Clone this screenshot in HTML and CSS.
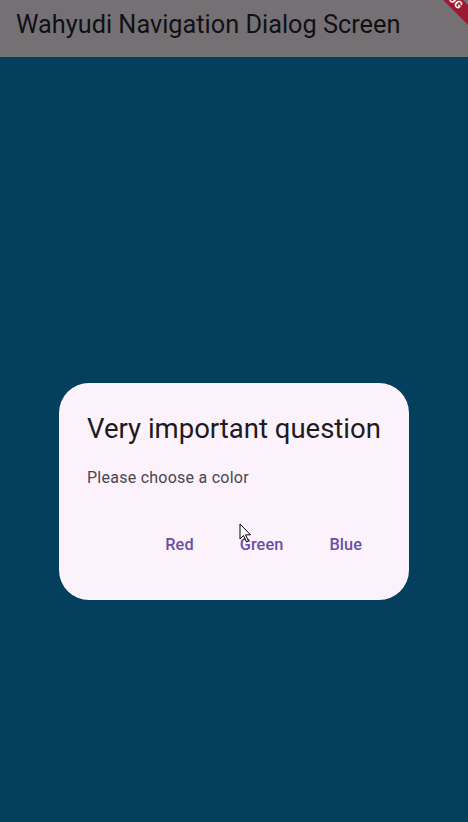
FILE: index.html
```html
<!DOCTYPE html>
<html>
<head>
<meta charset="utf-8">
<link rel="stylesheet" href="styles.css">
</head>
<body>
<div class="screen">
  <header class="appbar"><h1 class="appbar-title">Wahyudi Navigation Dialog Screen</h1></header>
  <main class="content">
    <div class="dialog">
      <h2 class="dialog-title">Very important question</h2>
      <p class="dialog-text">Please choose a color</p>
      <div class="actions">
        <button class="btn">Red</button>
        <button class="btn">Green</button>
        <button class="btn">Blue</button>
      </div>
    </div>
  </main>
  <div class="banner"><span>DEBUG</span></div>
  <svg class="cursor" width="14" height="20" viewBox="0 0 14 20"><path d="M1 1 L1 16 L4.5 12.5 L7.5 19 L9.5 18 L6.5 11.8 L11.5 11.8 Z" fill="#fff" stroke="#000" stroke-width="1"/></svg>
</div>
</body>
</html>
```
FILE: styles.css
```css
* { box-sizing: border-box; }
html, body { margin: 0; padding: 0; }
body { font-family: Roboto, "Noto Sans", sans-serif; background: #04405e; }
.screen { position: relative; width: 468px; height: 822px; overflow: hidden; display: flex; flex-direction: column; }
.appbar { height: 57px; background: #747074; display: flex; align-items: flex-start; padding: 10px 16px 0; flex: none; }
.appbar-title { margin: 0; font-weight: 400; font-size: 25.3px; line-height: 30px; color: #111014; letter-spacing: 0; white-space: nowrap; }
.content { flex: 1; padding-top: 326px; padding-left: 59px; }
.dialog { width: 350px; height: 217px; background: #fcf2fc; border-radius: 30px; padding: 29px 24px 0 28px; display: flex; flex-direction: column; }
.dialog-title { margin: 0; font-weight: 400; font-size: 27.5px; line-height: 34px; color: #1d1b20; white-space: nowrap; }
.dialog-text { margin: 21px 0 0; font-size: 16px; line-height: 22px; color: #49454f; letter-spacing: 0.25px; }
.actions { display: flex; justify-content: flex-end; gap: 0; margin-top: 36px; }
.btn { border: none; background: transparent; font-family: inherit; font-size: 16.3px; line-height: 20px; font-weight: 500; color: #6750a4; padding: 10px 23px; letter-spacing: 0.1px; }
.banner { position: absolute; top: 0; right: 0; width: 60px; height: 60px; overflow: hidden; pointer-events: none; }
.banner span { position: absolute; top: -12px; right: -20px; width: 80px; height: 14px; background: #9b1a32; color: #fff; font-size: 10.5px; font-weight: 700; line-height: 14px; text-align: center; transform: rotate(45deg); transform-origin: center; letter-spacing: 0.5px; }
.cursor { position: absolute; left: 239px; top: 523px; }
```
